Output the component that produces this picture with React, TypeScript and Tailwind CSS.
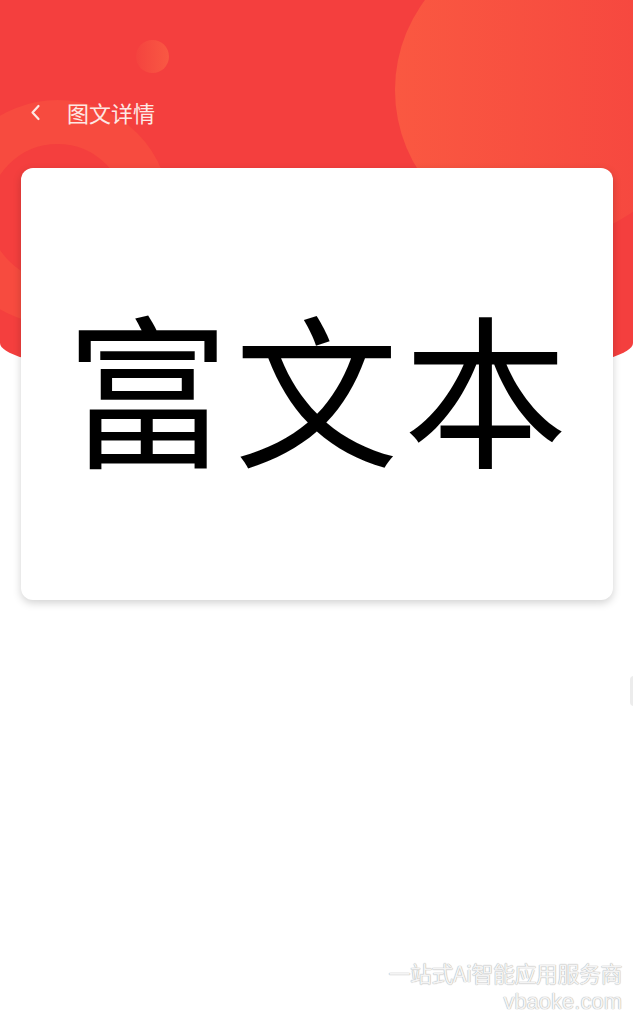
import React from "react";

const cjk = "font-['Noto_Sans_CJK_SC','Noto_Sans',sans-serif]";

function Header() {
  return (
    <div className="relative h-[383px] overflow-hidden rounded-b-[50%_40px] bg-[#f43f3e]">
      {/* decorations */}
      <div className="absolute left-[395px] top-[-60px] h-[300px] w-[300px] rounded-full bg-gradient-to-r from-[#fa5841] to-[#f5443f]" />
      <div className="absolute left-[136px] top-[40px] h-[33px] w-[33px] rounded-full bg-gradient-to-r from-[#f4433f] to-[#f95843]" />
      <div className="absolute left-[-55px] top-[100px] h-[225px] w-[225px] rounded-full border-[44px] border-[#f74b3f]" />

      <div className="relative flex items-center pl-[30px] pt-[98px]">
        <svg width="11" height="17" viewBox="0 0 11 17" fill="none">
          <path d="M8.5 2 L2.5 8.5 L8.5 15" stroke="#fde8e4" strokeWidth="2.2" strokeLinecap="round" strokeLinejoin="round" />
        </svg>
        <span className={`ml-[26px] text-[22px] leading-[28px] text-[#fde8e4] ${cjk}`}>图文详情</span>
      </div>
    </div>
  );
}

export default function App() {
  return (
    <div className="relative min-h-[1024px] w-full overflow-hidden bg-white">
      <Header />

      <div className="relative -mt-[215px] ml-[21px] mr-[20px] flex h-[432px] items-center justify-center rounded-[12px] bg-white shadow-[0_3px_8px_rgba(0,0,0,0.18)]">
        <span className={`pl-[4px] text-[164px] leading-none tracking-[5px] text-black ${cjk}`}>富文本</span>
      </div>

      <div className="absolute left-[630px] top-[676px] h-[30px] w-[4px] rounded-l-full bg-[#ececec]" />

      {/* watermark */}
      <div className={`absolute right-[11px] top-[958px] flex flex-col items-end text-[22px] leading-[29px] text-[#f4f4f4] [text-shadow:0_0_1px_#b0b0b0,0_0_1px_#b0b0b0] ${cjk}`}>
        <span className="tracking-[-0.5px]">一站式Ai智能应用服务商</span>
        <span className="font-['Liberation_Sans',sans-serif]">vbaoke.com</span>
      </div>
    </div>
  );
}
